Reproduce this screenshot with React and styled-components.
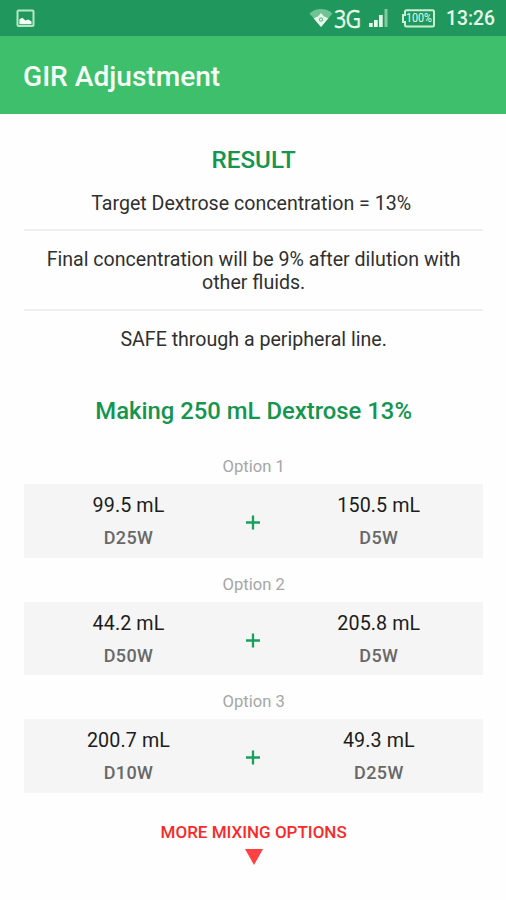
import React from 'react';
import styled, { createGlobalStyle } from 'styled-components';

const Global = createGlobalStyle`
  * { box-sizing: border-box; }
  body { margin: 0; background: #fefefe; font-family: Roboto, sans-serif; }
`;

const Screen = styled.div`
  height: 900px;
  display: flex;
  flex-direction: column;
  overflow: hidden;
`;

const StatusBar = styled.div`
  flex: none;
  height: 35.5px;
  padding: 1px 11px 0 16px;
  display: flex;
  align-items: center;
  background: #20985d;
  color: #e6f8ea;
`;

const Spacer = styled.div`
  flex: 1;
`;

const Network = styled.span`
  width: 27px;
  margin: 0 8px 0 1px;
  font: 400 25px/34px 'Open Sans', 'Noto Sans', sans-serif;
  letter-spacing: -1px;
  white-space: nowrap;
  transform: scaleX(0.86);
  transform-origin: left center;
  -webkit-text-stroke: 0.3px currentColor;
`;

const Clock = styled.span`
  margin-left: 11px;
  padding-top: 2px;
  font-size: 19.3px;
  font-weight: 500;
  line-height: 32px;
`;

const Header = styled.header`
  flex: none;
  height: 78.5px;
  padding: 4px 23px 0;
  display: flex;
  align-items: center;
  background: #3ebf6b;
`;

const Title = styled.h1`
  margin: 0;
  font-size: 28.1px;
  font-weight: 500;
  color: #f6fff7;
`;

const Content = styled.main`
  padding: 32px 23px 0 24.3px;
  text-align: center;
`;

const SectionTitle = styled.h2`
  margin: 0;
  padding-top: ${(p) => p.$top || 0}px;
  font-size: ${(p) => p.$size}px;
  font-weight: 500;
  line-height: 28px;
  color: #149550;
`;

const Result = styled.p`
  margin: 0;
  padding: ${(p) => p.$pad};
  border-bottom: ${(p) => (p.$last ? 0 : 2)}px solid #efefef;
  font-size: 19.6px;
  line-height: 23.4px;
  color: #303030;
`;

const OptionList = styled.div`
  display: flex;
  flex-direction: column;
  padding-top: 31px;
`;

const Option = styled.section`
  height: 117.5px;
`;

const OptionLabel = styled.h3`
  margin: 0;
  height: 28px;
  font-size: 16.6px;
  font-weight: 400;
  line-height: 22px;
  color: #a6a6a6;
`;

const Mixture = styled.div`
  height: 73.2px;
  display: grid;
  grid-template-columns: 1fr 42px 1fr;
  align-items: center;
  background: #f5f5f5;
`;

const Component = styled.div`
  display: flex;
  flex-direction: column;
  padding-top: 2px;
`;

const Amount = styled.span`
  font-size: 19.7px;
  line-height: 33px;
  letter-spacing: 0.1px;
  color: #1c1c1c;
`;

const Fluid = styled.span`
  font-size: 18px;
  font-weight: 500;
  line-height: 32px;
  letter-spacing: 0.4px;
  color: #686868;
`;

const Plus = styled.svg`
  justify-self: center;
  margin: 4px 1.5px 0 0;
`;

const MoreButton = styled.button`
  display: flex;
  flex-direction: column;
  align-items: center;
  margin: -15px auto 0;
  padding: 27px 0 0;
  border: 0;
  background: none;
  font: 500 17px/22px Roboto, sans-serif;
  color: #f92a2a;
`;

const Triangle = styled.svg`
  margin-top: 6px;
`;

const PictureIcon = () => (
  <svg width="19" height="19" viewBox="0 0 19 19">
    <rect x="1.500" y="1.500" width="16" height="15.500" rx="1" fill="none" stroke="#b5e7c4" strokeWidth="2" />
    <path d="M3.400 15.300V10.300l3-1.500 3 2.600 3-.8 3.100 2v2.700z" fill="#f2fff3" />
  </svg>
);

const WifiIcon = () => (
  <svg width="24" height="20" viewBox="0 0 24 20">
    <path d="M.5 5.500C7-.4 17-.4 23.500 5.500L12 19z" fill="#6fc394" />
    <path d="M4.800 10.500Q7.500 8.500 9 8.500L12 5l3 3.500q1.500 0 4.200 2L12 19z" fill="#e6f8ea" />
    <circle cx="12" cy="11.500" r="1.600" fill="none" stroke="#6fc394" strokeWidth="1.200" />
  </svg>
);

const SignalIcon = () => (
  <svg width="20" height="20" viewBox="0 0 20 20">
    <path d="M0 15h3.700v4H0zM5 12h3.700v7H5zM10 7h3.700v12H10z" fill="#e6f8ea" />
    <path d="M15.500 1h3v18h-3z" fill="#7fcb9f" />
  </svg>
);

const Battery = styled.svg`
  margin-left: 12px;
`;

const BatteryIcon = () => (
  <Battery width="34" height="19" viewBox="0 0 34 19">
    <path d="M5.500 1.200H31.500Q33 1.200 33 2.700V16Q33 17.500 31.500 17.500H5.500Q4 17.500 4 16V13H2V6H4V2.700Q4 1.200 5.500 1.200z" fill="none" stroke="#c8efd3" strokeWidth="2" />
    <text x="18" y="13.400" textAnchor="middle" textLength="26" lengthAdjust="spacingAndGlyphs" fontFamily="Roboto" fontSize="12" fill="#e6f8ea">100%</text>
  </Battery>
);

const options = [
  [['99.5 mL', 'D25W'], ['150.5 mL', 'D5W']],
  [['44.2 mL', 'D50W'], ['205.8 mL', 'D5W']],
  [['200.7 mL', 'D10W'], ['49.3 mL', 'D25W']],
];

const Part = ({ data }) => (
  <Component>
    <Amount>{data[0]}</Amount>
    <Fluid>{data[1]}</Fluid>
  </Component>
);

export default function App() {
  return (
    <Screen>
      <Global />
      <StatusBar>
        <PictureIcon />
        <Spacer />
        <WifiIcon />
        <Network>3G</Network>
        <SignalIcon />
        <BatteryIcon />
        <Clock>13:26</Clock>
      </StatusBar>
      <Header>
        <Title>GIR Adjustment</Title>
      </Header>
      <Content>
        <SectionTitle $size={24.2}>RESULT</SectionTitle>
        <Result $pad="18px 5px 13.500px 0">Target Dextrose concentration = 13%</Result>
        <Result $pad="17px 20px 14.700px">Final concentration will be 9% after dilution with other fluids.</Result>
        <Result $last $pad="16.500px 0 0">SAFE through a peripheral line.</Result>
        <SectionTitle $top={46} $size={23.85}>Making 250 mL Dextrose 13%</SectionTitle>
        <OptionList>
          {options.map(([left, right], i) => (
            <Option key={left[0]}>
              <OptionLabel>Option {i + 1}</OptionLabel>
              <Mixture>
                <Part data={left} />
                <Plus width="14" height="15" viewBox="0 0 14 15">
                  <path d="M0 7.500h14M7 .5v14" stroke="#18a05c" strokeWidth="2.300" />
                </Plus>
                <Part data={right} />
              </Mixture>
            </Option>
          ))}
        </OptionList>
        <MoreButton>
          MORE MIXING OPTIONS
          <Triangle width="18" height="16" viewBox="0 0 18 16">
            <path d="M0 0h18L9 16z" fill="#ff4143" />
          </Triangle>
        </MoreButton>
      </Content>
    </Screen>
  );
}
